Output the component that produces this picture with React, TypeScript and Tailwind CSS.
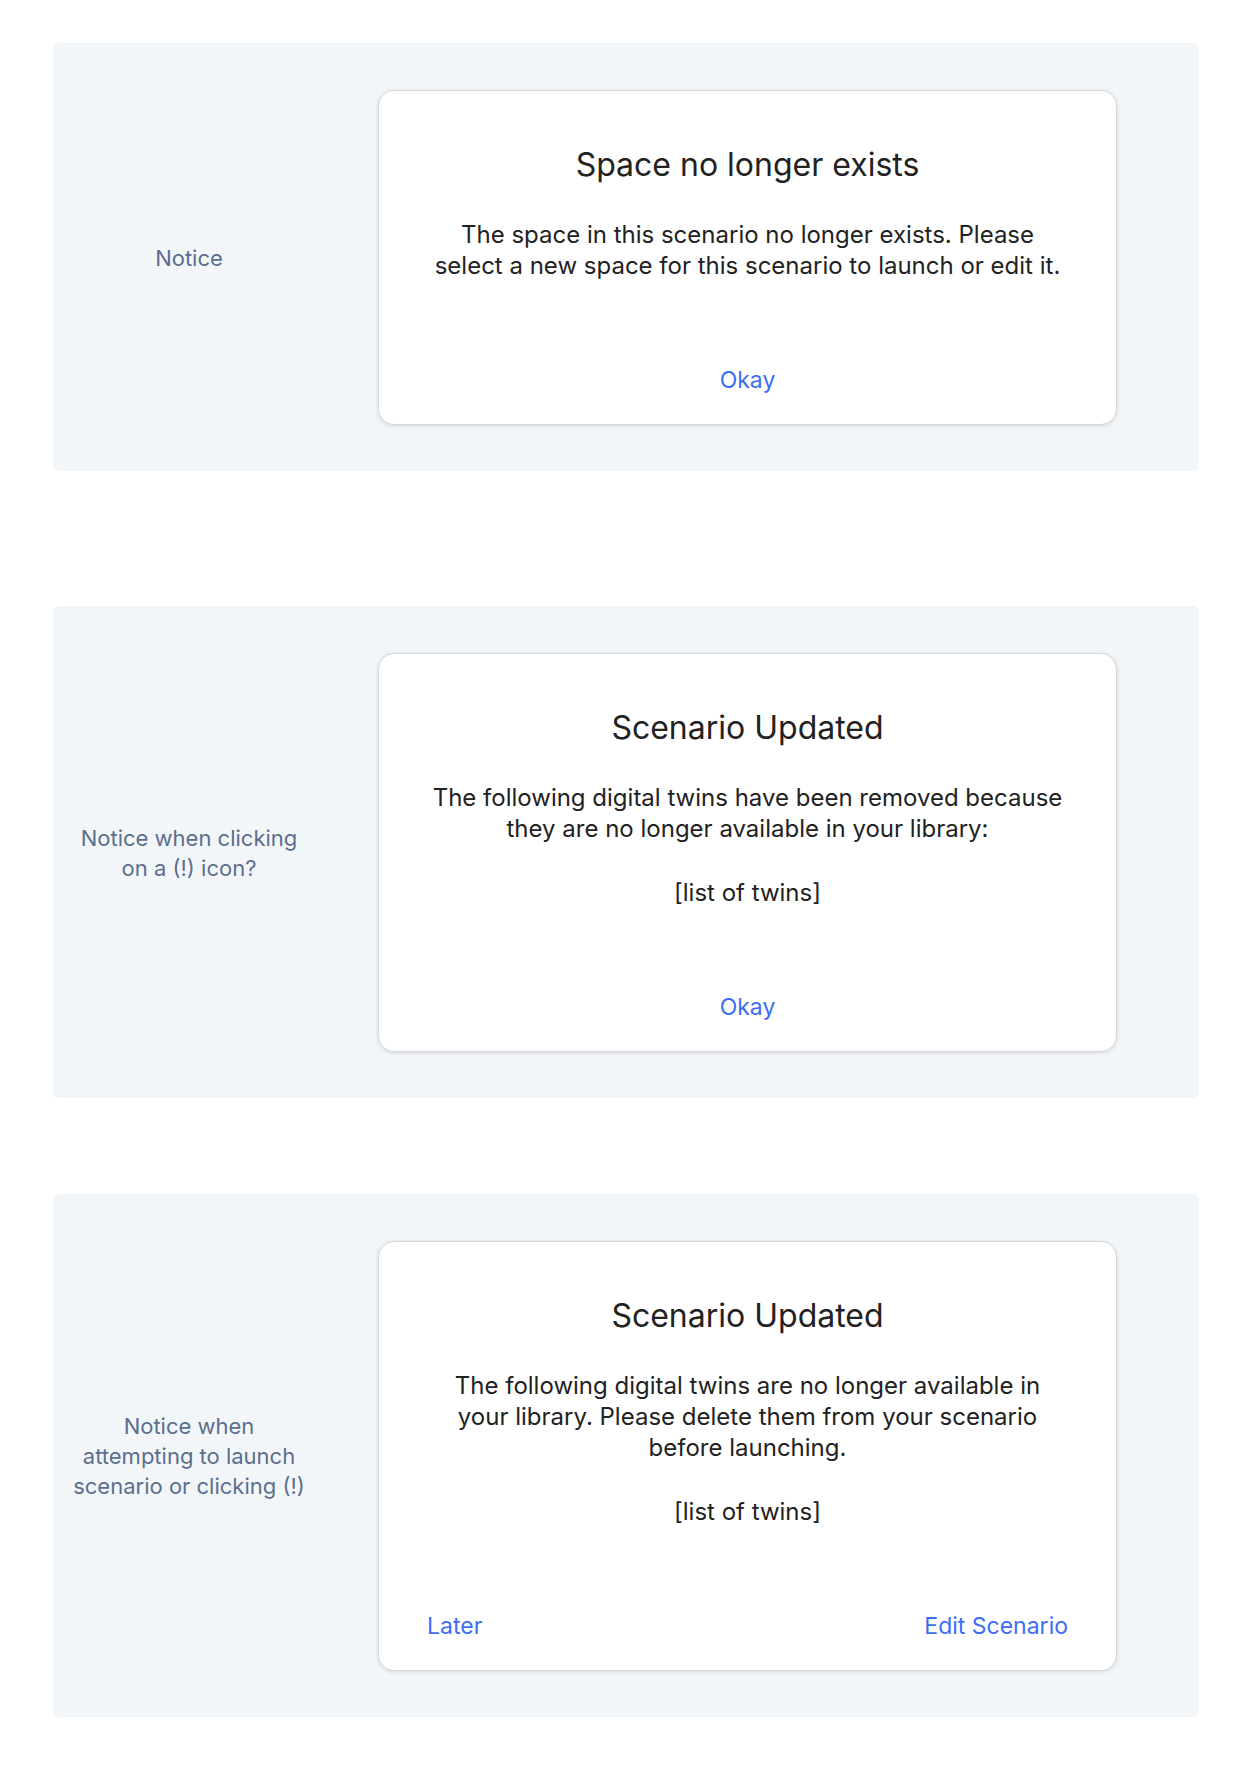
import { ReactNode } from "react";

interface NoticeProps {
  label: ReactNode;
  title: string;
  children: ReactNode;
  actions: ReactNode;
  className?: string;
}

function NoticePanel({ label, title, children, actions, className }: NoticeProps) {
  return (
    <section
      className={`flex items-center rounded-md bg-[#f3f6f9] pt-[47px] pb-[46px] pr-[82px] ${className ?? ""}`}
    >
      <div className="w-[272px] shrink-0 text-center text-[22px] leading-[30px] text-[#5b6f8d]">
        {label}
      </div>
      <div className="ml-[53px] w-[739px] shrink-0 rounded-2xl border border-[#d6d8db] bg-white shadow-[0_1px_4px_rgba(0,0,0,0.12)]">
        <div className="px-[50px] pt-[54px] text-center text-[#222]">
          <h2 className="text-[32px] leading-[40px]">{title}</h2>
          <div className="mt-[34px] text-[24px] leading-[31px]">{children}</div>
        </div>
        <div className="mt-[84px] flex px-[48px] pb-[29px] text-[23px] leading-[30px] text-[#3d6df4]">
          {actions}
        </div>
      </div>
    </section>
  );
}

export default function App() {
  return (
    <div
      className="min-h-screen bg-white pl-[53px] pr-[47px] pt-[43px] pb-[56px]"
      style={{ fontFamily: "Inter, 'Liberation Sans', sans-serif" }}
    >
      <NoticePanel
        label="Notice"
        title="Space no longer exists"
        actions={<button className="mx-auto">Okay</button>}
      >
        <p>
          The space in this scenario no longer exists. Please select a new
          space for this scenario to launch or edit it.
        </p>
      </NoticePanel>

      <NoticePanel
        className="mt-[135px]"
        label={
          <>
            Notice when clicking
            <br />
            on a (!) icon?
          </>
        }
        title="Scenario Updated"
        actions={<button className="mx-auto">Okay</button>}
      >
        <p>
          The following digital twins have been removed because they are no
          longer available in your library:
        </p>
        <p className="mt-[33px]">[list of twins]</p>
      </NoticePanel>

      <NoticePanel
        className="mt-[96px]"
        label={
          <>
            Notice when
            <br />
            attempting to launch
            <br />
            scenario or clicking (!)
          </>
        }
        title="Scenario Updated"
        actions={
          <div className="flex w-full justify-between">
            <button>Later</button>
            <button>Edit Scenario</button>
          </div>
        }
      >
        <p>
          The following digital twins are no longer available in your library.
          Please delete them from your scenario before launching.
        </p>
        <p className="mt-[33px]">[list of twins]</p>
      </NoticePanel>
    </div>
  );
}
